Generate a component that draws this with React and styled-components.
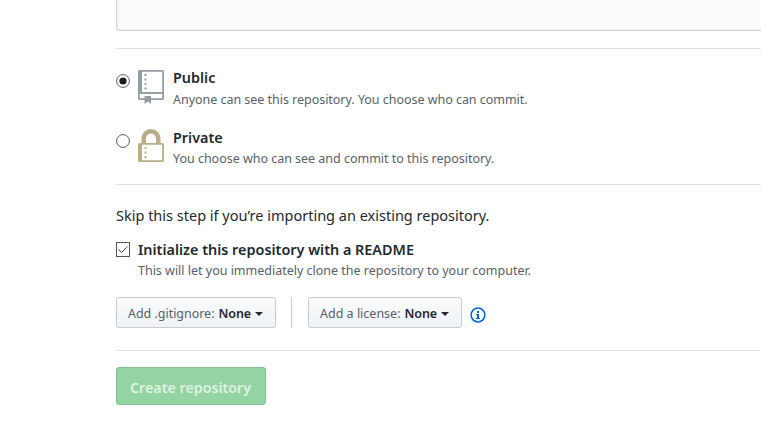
import React from "react";
import styled, { createGlobalStyle } from "styled-components";

const GlobalStyle = createGlobalStyle`
  * { box-sizing: border-box; }
  body {
    margin: 0;
    background: #fff;
    color: #24292e;
    font-family: "Noto Sans", "Open Sans", sans-serif;
    overflow: hidden;
  }
`;

const Page = styled.form`
  display: flex;
  flex-direction: column;
  height: 435px;
  padding-left: 116px;
  overflow: hidden;
`;

const DescriptionField = styled.div`
  flex: none;
  height: 31px;
  margin-bottom: 17px;
  background: #fafbfc;
  border: 1px solid #d1d5da;
  border-width: 0 0 1px 1px;
  border-bottom-left-radius: 3px;
  box-shadow: inset 1px -1px 1px rgba(27, 31, 35, 0.05);
`;

const Section = styled.section`
  flex: none;
  height: ${(p) => p.$height}px;
  padding-top: ${(p) => p.$top}px;
  border-top: 1px solid #dfe2e5;
`;

const Option = styled.label`
  display: flex;
  align-items: flex-start;
  height: ${(p) => p.$height}px;
`;

const Radio = styled.svg`
  flex: none;
  width: 14px;
  height: 14px;
  margin-top: ${(p) => p.$top}px;
`;

const OptionIcon = styled.svg`
  flex: none;
  width: 26px;
  height: 34px;
  margin: 0 9px 0 8px;
  fill: ${(p) => p.$color};
`;

const Copy = styled.div`
  display: flex;
  flex-direction: column;
  white-space: nowrap;
`;

const Title = styled.span`
  font-size: 14.4px;
  font-weight: 600;
  line-height: 20px;
  margin-top: ${(p) => p.$top || 0}px;
`;

const Note = styled.span`
  font-size: 12.5px;
  line-height: 18px;
  color: #586069;
  margin-top: ${(p) => p.$top || 0}px;
  letter-spacing: ${(p) => p.$track || 0}px;
`;

const Hint = styled.p`
  margin: 0 0 15px;
  font-size: 14.5px;
  line-height: 20px;
  white-space: nowrap;
`;

const Checkbox = styled.svg`
  flex: none;
  width: 14px;
  height: 15px;
  margin: 2px 8px 0 0;
`;

const Toolbar = styled.div`
  display: flex;
  align-items: flex-start;
`;

const Divider = styled.span`
  width: 1px;
  height: 31px;
  margin: 0 16px 0 15px;
  background: #c9cdd1;
`;

const SelectButton = styled.button`
  display: flex;
  align-items: center;
  width: ${(p) => p.$width}px;
  height: 31px;
  padding: 2px 0 0 11px;
  border: 1px solid #c8ccd0;
  border-radius: 3px;
  background: linear-gradient(#fafbfc, #eff3f6 90%);
  color: #586069;
  font: 12.5px/20px "Noto Sans", sans-serif;
  letter-spacing: ${(p) => p.$track || 0}px;
  white-space: pre;
`;

const Selected = styled.strong`
  margin-left: 4px;
  color: #24292e;
  font-weight: 600;
  letter-spacing: -0.1px;
`;

const Caret = styled.span`
  margin-left: 4px;
  border: 4px solid transparent;
  border-top-color: #24292e;
  border-bottom: 0;
`;

const InfoIcon = styled.svg`
  width: 16px;
  height: 16px;
  margin: 10px 0 0 8px;
`;

const CreateButton = styled.button`
  display: flex;
  align-items: center;
  width: 150px;
  height: 38px;
  padding: 4px 0 0 13px;
  border: 1px solid #83bd91;
  border-radius: 3px;
  background: #94d3a2;
  color: #dff2e4;
  font: 600 14.25px/20px "Noto Sans", sans-serif;
  white-space: nowrap;
`;

const RadioMark = ({ checked, top }) => (
  <Radio viewBox="0 0 14 14" $top={top}>
    <circle cx="7" cy="7" r="6.400" fill="#fff" stroke="#5a5a5a" />
    {checked && <circle cx="7" cy="7" r="3.600" fill="#1c1c1c" />}
  </Radio>
);

const RepoIcon = () => (
  <OptionIcon viewBox="0 0 26 34" $color="#959da5">
    <path
      fillRule="evenodd"
      d="M1.500 0h23A1.500 1.500 0 0 1 26 1.500V28.500a1.500 1.500 0 0 1-1.500 1.500H13v4l-3.200-2.600L6.500 34v-4H1.500A1.500 1.500 0 0 1 0 28.500v-27A1.500 1.500 0 0 1 1.500 0ZM4 1.800v20.200h20.200V1.800ZM1.700 24v4.300h4.800v-2.300H13v2.300h11.200v-4.300Z"
    />
    <path d="M6.500 4h2v2h-2zM6.500 8.500h2v2h-2zM6.500 13h2v2h-2zM6.500 17.500h2v2h-2z" />
  </OptionIcon>
);

const LockIcon = () => (
  <OptionIcon viewBox="0 0 26 34" $color="#b9ad85">
    <path
      fillRule="evenodd"
      d="M3.500 14V9.500a9.500 9.500 0 0 1 19 0V14h2a1.500 1.500 0 0 1 1.500 1.500v16a1.500 1.500 0 0 1-1.500 1.500h-23A1.500 1.500 0 0 1 0 31.500v-16A1.500 1.500 0 0 1 1.500 14ZM8 14h10V9.500a5 5 0 0 0-10 0ZM4 15.700v15.600h20.200v-15.600Z"
    />
    <path d="M6.500 18h2v2h-2zM6.500 22.500h2v2h-2zM6.500 27h2v2h-2z" />
  </OptionIcon>
);

export default function App() {
  return (
    <>
      <GlobalStyle />
      <Page>
        <DescriptionField />
        <Section $height={136} $top={21}>
          <Option $height={59}>
            <RadioMark checked top={4} />
            <RepoIcon />
            <Copy>
              <Title $top={-2}>Public</Title>
              <Note $top={3} $track={-0.03}>
                Anyone can see this repository. You choose who can commit.
              </Note>
            </Copy>
          </Option>
          <Option $height={50}>
            <RadioMark top={5} />
            <LockIcon />
            <Copy>
              <Title $top={-1}>Private</Title>
              <Note $top={2} $track={-0.02}>
                You choose who can see and commit to this repository.
              </Note>
            </Copy>
          </Option>
        </Section>
        <Section $height={166} $top={20}>
          <Hint>Skip this step if you’re importing an existing repository.</Hint>
          <Option $height={57}>
            <Checkbox viewBox="0 0 14 15">
              <rect x=".5" y=".5" width="13" height="14" fill="#fff" stroke="#555" />
              <path d="M2.500 7.500 5.500 10.500 11.500 4.500" fill="none" stroke="#444" />
            </Checkbox>
            <Copy>
              <Title>Initialize this repository with a README</Title>
              <Note $top={2} $track={-0.01}>
                This will let you immediately clone the repository to your computer.
              </Note>
            </Copy>
          </Option>
          <Toolbar>
            <SelectButton type="button" $width={160} $track={-0.03}>
              Add .gitignore:<Selected>None</Selected>
              <Caret />
            </SelectButton>
            <Divider />
            <SelectButton type="button" $width={154}>
              Add a license:<Selected>None</Selected>
              <Caret />
            </SelectButton>
            <InfoIcon viewBox="0 0 16 16">
              <circle cx="8" cy="8" r="6.900" fill="none" stroke="#0366d6" strokeWidth="1.500" />
              <path
                d="M7 4h2v2H7zM6 7h3v4h1v1H6v-1h1V8H6z"
                fill="#0366d6"
              />
            </InfoIcon>
          </Toolbar>
        </Section>
        <Section $height={85} $top={16}>
          <CreateButton type="button">Create repository</CreateButton>
        </Section>
      </Page>
    </>
  );
}
